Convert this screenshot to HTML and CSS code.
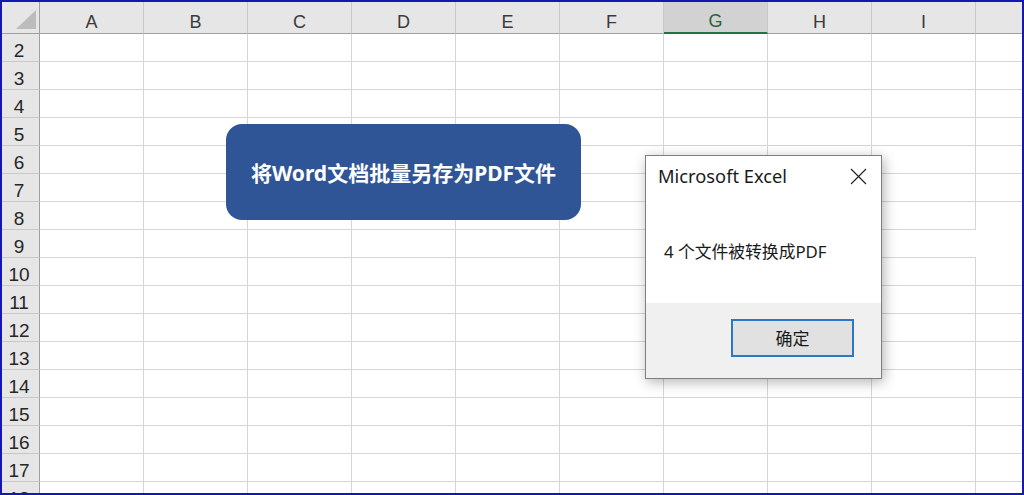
FILE: index.html
```html
<!DOCTYPE html>
<html lang="zh-CN">
<head>
<meta charset="utf-8">
<title>Excel</title>
<link rel="stylesheet" href="styles.css">
</head>
<body>
<div class="window">
  <div class="sheet">
    <div class="corner"><span class="tri"></span></div>
    <div class="ch">A</div><div class="ch">B</div><div class="ch">C</div><div class="ch">D</div><div class="ch">E</div><div class="ch">F</div><div class="ch sel">G</div><div class="ch">H</div><div class="ch">I</div><div class="ch"></div>

    <div class="rh">2</div><div class="c"></div><div class="c"></div><div class="c"></div><div class="c"></div><div class="c"></div><div class="c"></div><div class="c"></div><div class="c"></div><div class="c"></div><div class="c"></div>
    <div class="rh">3</div><div class="c"></div><div class="c"></div><div class="c"></div><div class="c"></div><div class="c"></div><div class="c"></div><div class="c"></div><div class="c"></div><div class="c"></div><div class="c"></div>
    <div class="rh">4</div><div class="c"></div><div class="c"></div><div class="c"></div><div class="c"></div><div class="c"></div><div class="c"></div><div class="c"></div><div class="c"></div><div class="c"></div><div class="c"></div>
    <div class="rh">5</div><div class="c"></div><div class="c"></div><div class="c"></div><div class="c"></div><div class="c"></div><div class="c"></div><div class="c"></div><div class="c"></div><div class="c"></div><div class="c"></div>
    <div class="rh">6</div><div class="c"></div><div class="c"></div><div class="c"></div><div class="c"></div><div class="c"></div><div class="c"></div><div class="c"></div><div class="c"></div><div class="c"></div><div class="c"></div>
    <div class="rh">7</div><div class="c"></div><div class="c"></div><div class="c"></div><div class="c"></div><div class="c"></div><div class="c"></div><div class="c"></div><div class="c"></div><div class="c"></div><div class="c"></div>
    <div class="rh">8</div><div class="c"></div><div class="c"></div><div class="c"></div><div class="c"></div><div class="c"></div><div class="c"></div><div class="c"></div><div class="c"></div><div class="c"></div><div class="c"></div>
    <div class="rh">9</div><div class="c"></div><div class="c"></div><div class="c"></div><div class="c"></div><div class="c"></div><div class="c"></div><div class="c"></div><div class="c"></div><div class="c"></div><div class="c"></div>
    <div class="rh">10</div><div class="c"></div><div class="c"></div><div class="c"></div><div class="c"></div><div class="c"></div><div class="c"></div><div class="c"></div><div class="c"></div><div class="c"></div><div class="c"></div>
    <div class="rh">11</div><div class="c"></div><div class="c"></div><div class="c"></div><div class="c"></div><div class="c"></div><div class="c"></div><div class="c"></div><div class="c"></div><div class="c"></div><div class="c"></div>
    <div class="rh">12</div><div class="c"></div><div class="c"></div><div class="c"></div><div class="c"></div><div class="c"></div><div class="c"></div><div class="c"></div><div class="c"></div><div class="c"></div><div class="c"></div>
    <div class="rh">13</div><div class="c"></div><div class="c"></div><div class="c"></div><div class="c"></div><div class="c"></div><div class="c"></div><div class="c"></div><div class="c"></div><div class="c"></div><div class="c"></div>
    <div class="rh">14</div><div class="c"></div><div class="c"></div><div class="c"></div><div class="c"></div><div class="c"></div><div class="c"></div><div class="c"></div><div class="c"></div><div class="c"></div><div class="c"></div>
    <div class="rh">15</div><div class="c"></div><div class="c"></div><div class="c"></div><div class="c"></div><div class="c"></div><div class="c"></div><div class="c"></div><div class="c"></div><div class="c"></div><div class="c"></div>
    <div class="rh">16</div><div class="c"></div><div class="c"></div><div class="c"></div><div class="c"></div><div class="c"></div><div class="c"></div><div class="c"></div><div class="c"></div><div class="c"></div><div class="c"></div>
    <div class="rh">17</div><div class="c"></div><div class="c"></div><div class="c"></div><div class="c"></div><div class="c"></div><div class="c"></div><div class="c"></div><div class="c"></div><div class="c"></div><div class="c"></div>
    <div class="rh">18</div><div class="c"></div><div class="c"></div><div class="c"></div><div class="c"></div><div class="c"></div><div class="c"></div><div class="c"></div><div class="c"></div><div class="c"></div><div class="c"></div>
  </div>

  <div class="macro-btn">将Word文档批量另存为PDF文件</div>

  <div class="glitch glitch-a"></div>
  <div class="glitch glitch-b"></div>

  <div class="dialog">
    <div class="dlg-title">
      <span class="dlg-caption">Microsoft Excel</span>
      <svg class="dlg-close" width="17" height="17" viewBox="0 0 17 17"><path d="M1 1 L16 16 M16 1 L1 16" stroke="#1e1e1e" stroke-width="1.1" fill="none"/></svg>
    </div>
    <div class="dlg-body">4 个文件被转换成PDF</div>
    <div class="dlg-footer">
      <div class="dlg-ok">确定</div>
    </div>
  </div>
</div>
</body>
</html>
```

FILE: styles.css
```css
html, body {
  margin: 0;
  padding: 0;
  background: #ffffff;
}

.window {
  position: relative;
  width: 1024px;
  height: 495px;
  box-sizing: border-box;
  border: 2px solid #1616b4;
  overflow: hidden;
  background: #ffffff;
  font-family: "Liberation Sans", Arial, sans-serif;
}

.sheet {
  display: grid;
  grid-template-columns: 38px repeat(10, 104px);
  grid-template-rows: 32px repeat(17, 28px);
  width: 1078px;
}

.corner {
  position: relative;
  background: #e6e6e6;
  border-right: 1px solid #a0a0a0;
  border-bottom: 1px solid #a0a0a0;
}

.tri {
  position: absolute;
  left: 14px;
  top: 8px;
  width: 20px;
  height: 19px;
  background: #bcbcbc;
  clip-path: polygon(100% 0, 100% 100%, 0 100%);
}

.ch {
  background: #e6e6e6;
  border-right: 1px solid #c8c8c8;
  border-bottom: 1px solid #a0a0a0;
  display: flex;
  align-items: center;
  justify-content: center;
  padding-top: 9px;
  box-sizing: border-box;
  font-size: 18px;
  color: #3a3a3a;
  line-height: 1;
}

.ch.sel {
  background: #d2d2d2;
  border-bottom: 2px solid #217346;
  color: #2f5f45;
  padding-top: 8px;
}

.rh {
  background: #e6e6e6;
  border-right: 1px solid #a0a0a0;
  border-bottom: 1px solid #c8c8c8;
  display: flex;
  align-items: center;
  justify-content: center;
  padding-top: 5px;
  padding-right: 3px;
  box-sizing: border-box;
  font-size: 19px;
  color: #262626;
  line-height: 1;
}

.c {
  border-right: 1px solid #d6d6d6;
  border-bottom: 1px solid #d6d6d6;
}

.macro-btn {
  position: absolute;
  left: 224px;
  top: 122px;
  width: 355px;
  height: 96px;
  border-radius: 16px;
  background: #2f5597;
  color: #ffffff;
  display: flex;
  align-items: center;
  justify-content: center;
  padding-bottom: 1px;
  box-sizing: border-box;
  font-family: "Noto Sans", "Noto Sans CJK SC", sans-serif;
  font-weight: 700;
  font-size: 21px;
  letter-spacing: 0;
}

.glitch {
  position: absolute;
  background: #ffffff;
}

.glitch-a {
  left: 880px;
  top: 228px;
  width: 142px;
  height: 27px;
  border-top-right-radius: 3px;
}

.glitch-b {
  left: 974px;
  top: 200px;
  width: 48px;
  height: 83px;
}

.dialog {
  position: absolute;
  left: 643px;
  top: 153px;
  width: 237px;
  height: 224px;
  box-sizing: border-box;
  border: 1px solid #7f7f7f;
  background: #ffffff;
  box-shadow: 2px 3px 12px rgba(0, 0, 0, 0.3);
  display: flex;
  flex-direction: column;
  font-family: "Noto Sans", "Noto Sans CJK SC", sans-serif;
}

.dlg-title {
  display: flex;
  align-items: center;
  justify-content: space-between;
  height: 38px;
  padding: 0 14px 0 12px;
}

.dlg-caption {
  font-size: 18.3px;
  color: #1a1a1a;
}

.dlg-close {
  display: block;
  margin-top: 2px;
}

.dlg-body {
  flex: 1;
  padding: 48px 0 0 18px;
  font-size: 16.8px;
  line-height: 1.2;
  color: #1a1a1a;
}

.dlg-footer {
  height: 75px;
  background: #f0f0f0;
  display: flex;
  justify-content: flex-end;
  align-items: flex-start;
  padding: 16px 27px 0 0;
  box-sizing: border-box;
}

.dlg-ok {
  width: 123px;
  height: 38px;
  box-sizing: border-box;
  border: 2px solid #2a78c6;
  background: #e1e1e1;
  display: flex;
  align-items: center;
  justify-content: center;
  padding-bottom: 2px;
  font-size: 17px;
  color: #1a1a1a;
}
```
